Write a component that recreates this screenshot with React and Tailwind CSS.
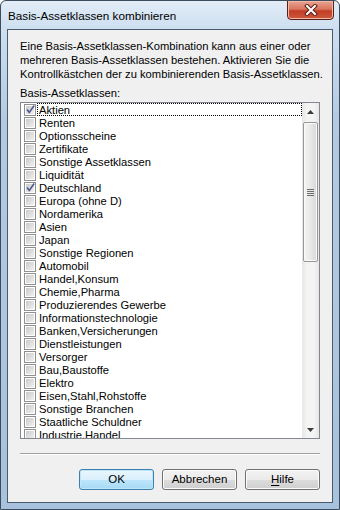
import React from "react";

const items = [
  ["Aktien", true],
  ["Renten", false],
  ["Optionsscheine", false],
  ["Zertifikate", false],
  ["Sonstige Assetklassen", false],
  ["Liquidität", false],
  ["Deutschland", true],
  ["Europa (ohne D)", false],
  ["Nordamerika", false],
  ["Asien", false],
  ["Japan", false],
  ["Sonstige Regionen", false],
  ["Automobil", false],
  ["Handel,Konsum", false],
  ["Chemie,Pharma", false],
  ["Produzierendes Gewerbe", false],
  ["Informationstechnologie", false],
  ["Banken,Versicherungen", false],
  ["Dienstleistungen", false],
  ["Versorger", false],
  ["Bau,Baustoffe", false],
  ["Elektro", false],
  ["Eisen,Stahl,Rohstoffe", false],
  ["Sonstige Branchen", false],
  ["Staatliche Schuldner", false],
  ["Industrie,Handel", false],
];

function CheckBox({ checked }) {
  return (
    <div className="relative w-[12px] h-[12px] border border-[#8f8f8f] bg-white shrink-0">
      <div className="absolute inset-[1px] bg-[linear-gradient(135deg,#cbcbcb,#f0f0f0)]" />
      {checked && (
        <svg className="absolute left-[0px] top-[-1px]" width="11" height="11" viewBox="0 0 11 11">
          <path d="M2 5.5 L4.3 8.5 L9.2 1.5" fill="none" stroke="#4c5a8f" strokeWidth="1.6" />
        </svg>
      )}
    </div>
  );
}

function Button({ children, def }) {
  return (
    <div
      className={
        "w-[75px] h-[21px] rounded-[3px] border flex items-center justify-center text-[11.5px] text-black " +
        (def
          ? "border-[#3c7fb1] bg-[linear-gradient(180deg,#eaf6fd_0%,#d9f0fc_50%,#bee6fd_50%,#a7d9f5_100%)] shadow-[inset_0_0_0_1px_#bfe5f8]"
          : "border-[#707070] bg-[linear-gradient(180deg,#f2f2f2_0%,#ebebeb_50%,#dddddd_50%,#cfcfcf_100%)] shadow-[inset_0_0_0_1px_#fcfcfc]")
      }
    >
      {children}
    </div>
  );
}

export default function App() {
  return (
    <div
      className="w-[340px] h-[510px] flex flex-col rounded-t-[6px] border border-[#3d4c5c] bg-[linear-gradient(180deg,#e2ecf7_0px,#cddff0_28px,#b3cae2_120px,#a8c1dc_100%)] overflow-hidden"
      style={{ fontFamily: '"Liberation Sans", Arial, sans-serif' }}
    >
      <div className="h-[28px] flex items-start justify-between shrink-0">
        <div className="pl-[7px] pt-[8px] text-[11.7px] leading-[14px] text-black">
          Basis-Assetklassen kombinieren
        </div>
        <div className="mr-[5px] mt-[-1px] w-[47px] h-[20px] rounded-b-[4px] border border-[#5a1e18] bg-[linear-gradient(180deg,#e8a493_0%,#d8765f_45%,#c23d25_55%,#cc5a3d_100%)] shadow-[inset_0_0_0_1px_#f0b9a8] flex items-center justify-center">
          <svg width="14" height="12" viewBox="0 0 14 12">
            <path d="M3 2 L11 10 M11 2 L3 10" stroke="#5b1d16" strokeWidth="4" strokeLinecap="square" />
            <path d="M3 2 L11 10 M11 2 L3 10" stroke="#ffffff" strokeWidth="2" strokeLinecap="square" />
          </svg>
        </div>
      </div>
      <div className="flex-1 mx-[6px] mb-[6px] border border-[#4a5b6e] bg-[#f0f0f0] px-[12px] pt-[9px] pb-[12px] flex flex-col text-[11.2px] text-black">
        <p className="leading-[14px] whitespace-nowrap">
          Eine Basis-Assetklassen-Kombination kann aus einer oder
          <br />
          mehreren Basis-Assetklassen bestehen. Aktivieren Sie die
          <br />
          Kontrollkästchen der zu kombinierenden Basis-Assetklassen.
        </p>
        <div className="mt-[5px] leading-[14px]">Basis-Assetklassen:</div>
        <div className="mt-[2px] h-[337px] border border-[#828790] bg-white flex overflow-hidden">
          <div className="flex-1 flex flex-col overflow-hidden">
            {items.map(([label, checked], i) => (
              <div key={label} className="h-[13px] shrink-0 flex items-center pl-[3px]">
                <CheckBox checked={checked} />
                <div
                  className={
                    "flex-1 h-[13px] ml-[1px] pl-[1px] leading-[12px] whitespace-nowrap " +
                    (i === 0 ? "border border-dotted border-black" : "border border-transparent")
                  }
                >
                  {label}
                </div>
              </div>
            ))}
          </div>
          <div className="w-[17px] shrink-0 flex flex-col bg-[linear-gradient(90deg,#e6e6e6,#f4f4f4_30%,#f4f4f4_70%,#e6e6e6)]">
            <div className="h-[17px] flex items-center justify-center">
              <svg width="7" height="4" viewBox="0 0 7 4"><path d="M0 4 L3.5 0 L7 4 Z" fill="#3c3c3c" /></svg>
            </div>
            <div className="mt-[2px] mx-[1px] h-[140px] rounded-[2px] border border-[#979797] bg-[linear-gradient(90deg,#f5f5f5,#e8e8e8_50%,#d6d6d6)] shadow-[inset_0_0_0_1px_#fbfbfb] flex flex-col items-center justify-center gap-[1px]">
              <div className="w-[7px] h-[1px] bg-[#6e6e6e]" />
              <div className="w-[7px] h-[1px] bg-[#6e6e6e]" />
              <div className="w-[7px] h-[1px] bg-[#6e6e6e]" />
              <div className="w-[7px] h-[1px] bg-[#6e6e6e]" />
            </div>
            <div className="flex-1" />
            <div className="h-[17px] flex items-center justify-center">
              <svg width="7" height="4" viewBox="0 0 7 4"><path d="M0 0 L7 0 L3.5 4 Z" fill="#3c3c3c" /></svg>
            </div>
          </div>
        </div>
        <div className="mt-[14px] h-[1px] bg-[#a0a0a0] shadow-[0_1px_0_#ffffff]" />
        <div className="mt-[15px] flex justify-end gap-[8px]">
          <Button def>OK</Button>
          <Button>Abbrechen</Button>
          <Button>
            <span className="underline underline-offset-2">H</span>ilfe
          </Button>
        </div>
      </div>
    </div>
  );
}
